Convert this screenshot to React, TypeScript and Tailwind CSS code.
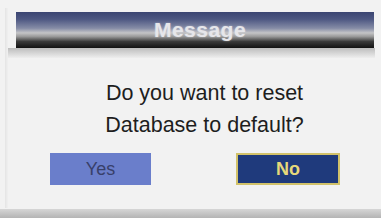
export default function App() {
  return (
    <div className="relative flex h-[218px] w-[381px] flex-col bg-[#f2f2f2] font-['Liberation_Sans',Arial,sans-serif]">
      {/* outer frame line */}
      <div className="pointer-events-none absolute left-[5px] top-[8px] h-[200px] w-[3px] bg-gradient-to-r from-[#e4e4e4] to-[#f0f0f0]" />

      {/* title bar */}
      <div className="ml-[16px] mr-[7px] mt-[12px] flex h-[36px] items-center justify-center pl-[10px] bg-[linear-gradient(to_bottom,#3b4572_0%,#4d5782_20%,#858ca6_45%,#c4c4c6_58%,#9a9a9a_68%,#3a3a3a_82%,#121212_100%)]">
        <span className="text-[21px] font-bold tracking-[0.5px] text-[#e6e6ea] [text-shadow:0_0_2px_rgba(255,255,255,0.4)]">
          Message
        </span>
      </div>
      <div className="mx-[6px] h-[10px] bg-gradient-to-b from-[#bdbdbd] to-[#eeeeee]" />

      {/* message */}
      <div className="mt-[19px] flex flex-col items-center pl-[28px] text-[21.5px] leading-[32px] text-[#1e1e1e]">
        <div>Do you want to reset</div>
        <div>Database to default?</div>
      </div>

      {/* buttons */}
      <div className="mt-[12px] flex">
        <div className="ml-[50px] flex h-[32px] w-[101px] items-center justify-center bg-[#6a7ecb] text-[18px] text-[#38406a]">
          Yes
        </div>
        <div className="ml-[85px] flex h-[32px] w-[104px] items-center justify-center border-2 border-[#d2c26a] bg-[#1f3a7c] text-[18px] font-bold text-[#e6d87a]">
          No
        </div>
      </div>

      {/* bottom band */}
      <div className="mt-auto h-[9px] bg-gradient-to-b from-[#d6d6d6] to-[#b4b4b4]" />
    </div>
  );
}
